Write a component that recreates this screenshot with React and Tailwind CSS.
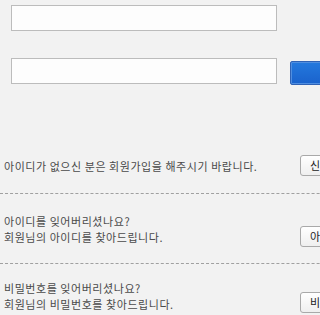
import React from 'react';

const font = { fontFamily: '"Noto Sans CJK KR", "Noto Sans", sans-serif' };

function SmallButton({ label }) {
  return (
    <button className="h-[21px] shrink-0 rounded-[3px] border border-[#a9a9a9] bg-gradient-to-b from-[#ffffff] to-[#efefef] px-[9px] text-[11px] leading-none text-[#222] whitespace-nowrap">
      {label}
    </button>
  );
}

export default function App() {
  return (
    <div className="w-[320px] h-[315px] overflow-hidden bg-[#f2f2f2]" style={font}>
      <div className="w-[400px]">
        {/* login inputs */}
        <div className="pl-[11px] pt-[5px]">
          <input className="block w-[266px] h-[26px] border border-[#bcbcbc] bg-[#fdfdfd] outline-none" />
          <div className="mt-[27px] flex items-start">
            <input className="block w-[266px] h-[26px] border border-[#bcbcbc] bg-[#fdfdfd] outline-none" />
            <button className="ml-[13px] mt-[3px] w-[70px] h-[24px] rounded-[2px] border border-[#2f62b5] bg-gradient-to-b from-[#2479de] to-[#1a62cc] shadow-[inset_0_0_0_1px_#4f8ee0]" />
          </div>
        </div>

        {/* join */}
        <div className="mt-[70px] border-b border-dashed border-[#a0a0a0] pb-[17px]">
          <div className="flex items-center">
            <p className="w-[300px] pl-[4px] text-[11px] leading-[16px] tracking-[0.55px] text-[#4a4a4a]">
              아이디가 없으신 분은 회원가입을 해주시기 바랍니다.
            </p>
            <SmallButton label="신규가입" />
          </div>
        </div>

        {/* find id */}
        <div className="border-b border-dashed border-[#a0a0a0] pt-[19px] pb-[16px]">
          <div className="flex items-end">
            <p className="w-[300px] pl-[4px] pb-[2px] text-[11px] leading-[16px] tracking-[0.55px] text-[#4a4a4a]">
              아이디를 잊어버리셨나요?
              <br />
              회원님의 아이디를 찾아드립니다.
            </p>
            <SmallButton label="아이디 찾기" />
          </div>
        </div>

        {/* find password */}
        <div className="pt-[16px]">
          <div className="flex items-end">
            <p className="w-[300px] pl-[4px] pb-[1px] text-[11px] leading-[16px] tracking-[0.55px] text-[#4a4a4a]">
              비밀번호를 잊어버리셨나요?
              <br />
              회원님의 비밀번호를 찾아드립니다.
            </p>
            <SmallButton label="비밀번호 찾기" />
          </div>
        </div>
      </div>
    </div>
  );
}
